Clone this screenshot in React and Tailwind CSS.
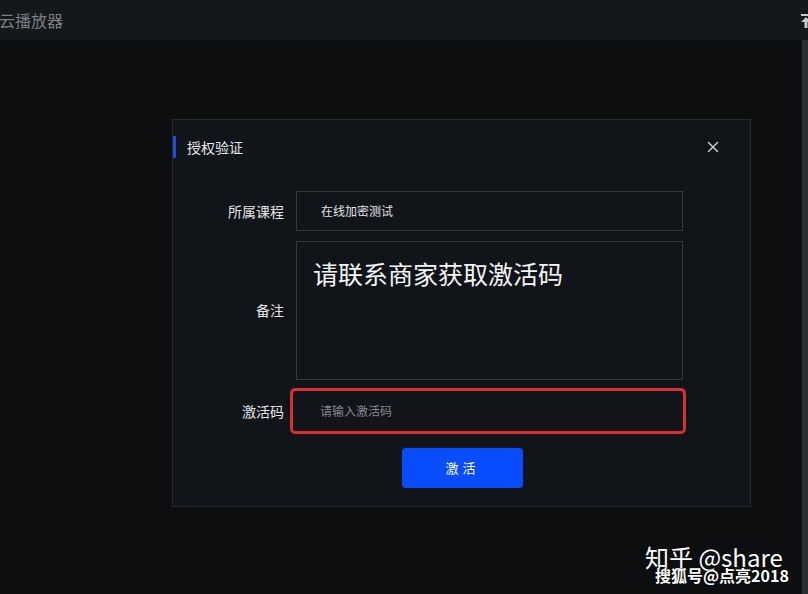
import React from 'react';
import { X } from 'lucide-react';

const FONT = { fontFamily: '"Noto Sans CJK SC", "Noto Sans", sans-serif' };

function PinIcon() {
  return (
    <svg width="12" height="14" viewBox="0 0 12 14" className="text-[#c8cacc]">
      <rect x="1" y="0" width="10" height="2" fill="currentColor" />
      <path d="M6 3 L11 8 H7.5 V14 H4.5 V8 H1 Z" fill="currentColor" />
    </svg>
  );
}

function Row({ label, children }) {
  return (
    <div className="flex items-center">
      <div className="w-[111px] shrink-0 text-right text-[14px] text-[#e4e6e8]">{label}</div>
      <div className="flex-1 pl-[12px]">{children}</div>
    </div>
  );
}

export default function App() {
  return (
    <div className="relative w-[808px] h-[594px] overflow-hidden bg-[#0c0e10]" style={FONT}>
      {/* Top bar */}
      <div className="h-[40px] bg-[#15181b] flex items-center justify-between">
        <span className="text-[16px] text-[#7b7e82] -ml-[1px]">云播放器</span>
        <div className="mr-[-4px] pt-[2px]"><PinIcon /></div>
      </div>

      <div className="flex">
        <div className="flex-1 pl-[172px] pt-[79px]">
          {/* Dialog */}
          <div className="w-[579px] h-[388px] border border-[#262a2f] bg-[#111418]">
            <div className="flex items-center justify-between pt-[16px] pr-[28px]">
              <div className="flex items-center">
                <div className="w-[3px] h-[22px] bg-[#1a4fe0]" />
                <span className="ml-[11px] text-[14px] text-[#e8eaec]">授权验证</span>
              </div>
              <X size={18} strokeWidth={2} className="text-[#c9cbcd]" />
            </div>

            <div className="mt-[33px] pr-[67px] flex flex-col">
              <Row label="所属课程">
                <div className="h-[40px] border border-[#34383d] flex items-center pl-[24px] text-[12px] text-[#e2e4e6]">
                  在线加密测试
                </div>
              </Row>
              <div className="h-[10px]" />
              <Row label="备注">
                <div className="h-[139px] border border-[#34383d] pl-[16px] pt-[13px] text-[25px] leading-[36px] text-[#f4f5f6]">
                  请联系商家获取激活码
                </div>
              </Row>
              <div className="h-[8px]" />
              <div className="flex items-center">
                <div className="w-[111px] shrink-0 text-right text-[14px] text-[#e4e6e8]">激活码</div>
                <div className="flex-1 pl-[6px] -mr-[3px]">
                  <div className="h-[46px] rounded-[5px] border-[3px] border-[#d8302b] flex items-center pl-[27px] text-[12px] text-[#85898e]">
                    请输入激活码
                  </div>
                </div>
              </div>
            </div>

            <div className="flex justify-center mt-[14px] pl-[2px]">
              <button className="w-[121px] h-[40px] rounded-[4px] bg-[#0a4dfd] text-[13px] text-white tracking-[4px]">
                激活
              </button>
            </div>
          </div>
        </div>
        <div className="w-[6px] h-[554px] bg-[#2a2d31]" />
      </div>

      {/* Watermark */}
      <div className="absolute left-[645px] top-[542px] text-[24px] leading-[30px] text-white">知乎 @share</div>
      <div className="absolute left-[655px] top-[564px] text-[16px] leading-[22px] font-bold text-white [text-shadow:0_0_2px_#000]">
        搜狐号@点亮2018
      </div>
    </div>
  );
}
